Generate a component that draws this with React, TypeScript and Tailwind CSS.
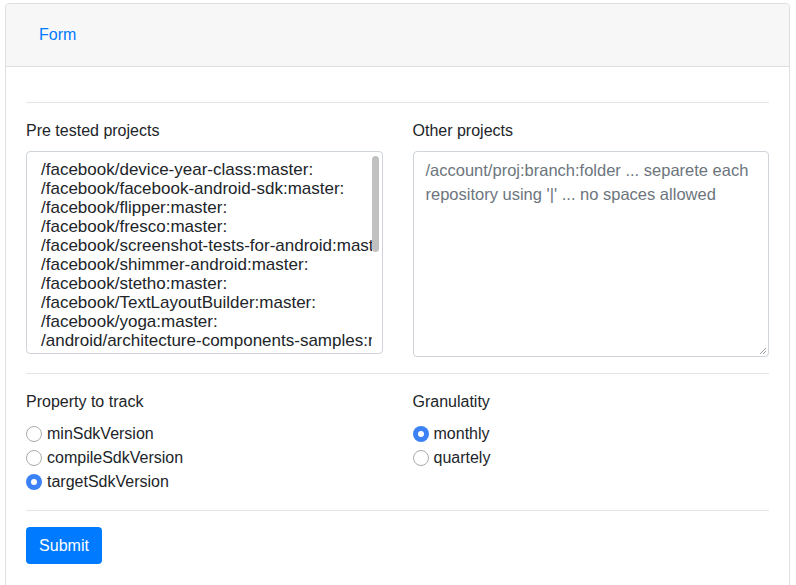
const preTested = [
  "/facebook/device-year-class:master:",
  "/facebook/facebook-android-sdk:master:",
  "/facebook/flipper:master:",
  "/facebook/fresco:master:",
  "/facebook/screenshot-tests-for-android:master:",
  "/facebook/shimmer-android:master:",
  "/facebook/stetho:master:",
  "/facebook/TextLayoutBuilder:master:",
  "/facebook/yoga:master:",
  "/android/architecture-components-samples:master:",
];

function Radio({ label, checked }: { label: string; checked?: boolean }) {
  return (
    <label className="flex h-6 items-center">
      {checked ? (
        <span className="flex h-4 w-4 items-center justify-center rounded-full bg-[#3b82f6]">
          <span className="h-[6px] w-[6px] rounded-full bg-white" />
        </span>
      ) : (
        <span className="h-4 w-4 rounded-full border border-[#aaaaaa] bg-white" />
      )}
      <span className="ml-[5px]">{label}</span>
    </label>
  );
}

export default function App() {
  return (
    <div
      className="min-h-[585px] bg-white pt-[3px] pl-[5px] text-[16px] leading-6 text-[#212529]"
      style={{ fontFamily: '"Liberation Sans", Arial, sans-serif' }}
    >
      <div className="w-[785px] min-h-[600px] rounded border border-[#dfdfdf]">
        {/* Header */}
        <div className="flex h-[63px] items-center border-b border-[#dfdfdf] bg-[#f7f7f7] pl-[33px] rounded-t">
          <span className="text-[#007bff]">Form</span>
        </div>

        {/* Body */}
        <div className="px-5 pb-5">
          <hr className="mt-[35px] mb-4 border-t border-[#e5e5e5]" />

          <div className="grid grid-cols-2 gap-[30px]">
            <div>
              <div className="mb-2">Pre tested projects</div>
              <div className="relative h-[203px] rounded border border-[#ced4da] bg-white">
                <div className="mr-[10px] h-full overflow-hidden pt-[8px] pl-[14px] text-[17px] leading-[19px] whitespace-nowrap">
                  {preTested.map((p) => (
                    <div key={p}>{p}</div>
                  ))}
                </div>
                <div className="absolute top-[4px] right-[3px] h-[96px] w-[7px] rounded-full bg-[#c1c1c1]" />
              </div>
            </div>
            <div>
              <div className="mb-2">Other projects</div>
              <div className="relative h-[206px] rounded border border-[#ced4da] bg-white px-3 py-[6px] text-[16.5px] leading-6 text-[#6c757d]">
                /account/proj:branch:folder ... separete each repository using '|' ... no spaces allowed
                <svg className="absolute right-[1px] bottom-[1px]" width="8" height="8" viewBox="0 0 8 8">
                  <path d="M7 1 L1 7 M7 4 L4 7" stroke="#9a9a9a" strokeWidth="1" />
                </svg>
              </div>
            </div>
          </div>

          <hr className="mt-4 mb-4 border-t border-[#e5e5e5]" />

          <div className="grid grid-cols-2 gap-[30px]">
            <div>
              <div className="mb-2">Property to track</div>
              <Radio label="minSdkVersion" />
              <Radio label="compileSdkVersion" />
              <Radio label="targetSdkVersion" checked />
            </div>
            <div>
              <div className="mb-2">Granulatity</div>
              <Radio label="monthly" checked />
              <Radio label="quartely" />
            </div>
          </div>

          <hr className="mt-4 mb-4 border-t border-[#e5e5e5]" />

          <button className="h-[37px] w-[76px] rounded bg-[#007bff] text-white">Submit</button>
        </div>
      </div>
    </div>
  );
}
